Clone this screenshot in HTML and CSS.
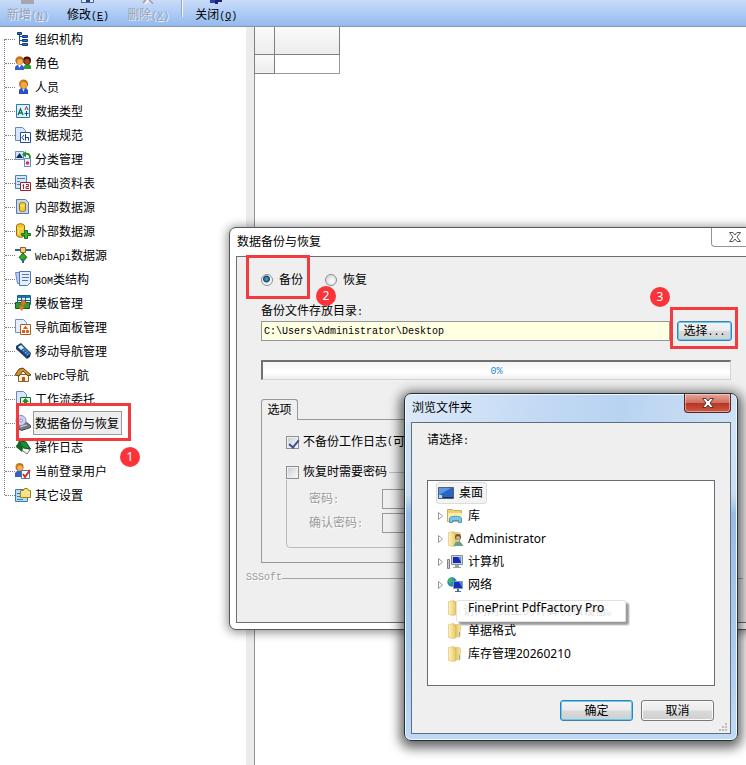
FILE: index.html
```html
<!DOCTYPE html>
<html lang="zh-CN">
<head>
<meta charset="utf-8">
<title>数据备份与恢复</title>
<link rel="stylesheet" href="styles.css">
</head>
<body>
<svg class="defs" width="0" height="0" aria-hidden="true">
  <defs>
    <linearGradient id="folder-front" x2="1"><stop offset="0" stop-color="#fdf3bc"/><stop offset="1" stop-color="#e6cb6c"/></linearGradient>
    <linearGradient id="folder-back" x2="1"><stop offset="0" stop-color="#d9b44c"/><stop offset="1" stop-color="#f8e9a4"/></linearGradient>
    <linearGradient id="hair" x2="1" y2="1"><stop offset="0" stop-color="#d89028"/><stop offset="1" stop-color="#8c4408"/></linearGradient>
    <symbol id="folder" viewBox="0 0 16 16">
      <path fill="url(#folder-back)" stroke="#d8bc64" stroke-width=".6" d="M7 1.500h5l1.500 1v5l-.5 1v5.500H7z"/>
      <path fill="url(#folder-front)" stroke="#d8bc64" stroke-width=".6" d="M1.500 1.500L7 .5v2l1.500 1V15L7 15.500l-5.500-1z"/>
      <path stroke="#7ab0b8" d="M12.500 9v4"/>
    </symbol>
  </defs>
</svg>
<div class="app">
  <header class="toolbar">
    <button class="tool" disabled>
      <svg class="tool-icon" width="16" height="4" viewBox="0 0 16 4"><path fill="#a6a6ae" d="M1 0h13v4H1z"/></svg>
      <span>新增<span class="mono">(<u>N</u>)</span></span>
    </button>
    <button class="tool">
      <svg class="tool-icon" width="16" height="4" viewBox="0 0 16 4"><path fill="#4a68a4" d="M1 0h13v3H1z"/><path fill="#dfe9f8" d="M2 0h11v2H2z"/><path fill="#27427c" d="M6 0h4v2H6z"/></svg>
      <span>修改<span class="mono">(<u>E</u>)</span></span>
    </button>
    <button class="tool" disabled>
      <svg class="tool-icon" width="16" height="4" viewBox="0 0 16 4"><path fill="none" stroke="#fff" stroke-width="2" d="M4 4l4-4 5 5"/><path fill="none" stroke="#a6a6ae" stroke-width="2" d="M3 3l3-3M9 0l4 4"/></svg>
      <span>删除<span class="mono">(<u>X</u>)</span></span>
    </button>
    <span class="tool-sep"></span>
    <button class="tool">
      <svg class="tool-icon" width="16" height="4" viewBox="0 0 16 4"><path fill="#2c3fb0" d="M2 0h5v3H2z"/><path fill="#20246c" d="M7 0h7v2h-4v2H7z"/></svg>
      <span>关闭<span class="mono">(<u>Q</u>)</span></span>
    </button>
  </header>

  <div class="workspace">
    <nav class="sidebar">
      <ul class="tree">
        <li class="node"><svg class="icon" viewBox="0 0 16 16"><path fill="none" stroke="#1c4a9c" d="M4.500 3v10.500H8M4.500 5.500H8M4.500 9.500H8"/><path fill="#2e78c8" stroke="#15377c" d="M2.500 1.500h4v2h-4zM7.500 4.500h5v2h-5zM7.500 8.500h5v2h-5zM7.500 12.500h5v2h-5z"/></svg><a href="#">组织机构</a></li>
        <li class="node"><svg class="icon" viewBox="0 0 16 16"><path fill="#2d9a2d" d="M9 14v-3l2-2h3l2 2v3z"/><circle cx="12" cy="5.500" r="4" fill="#3a1408"/><circle cx="12" cy="6.500" r="2.700" fill="#a8461c"/><path fill="#2f5fd8" d="M0 15v-3l2-2h5l2 2v3z"/><path fill="#fff" d="M3 10h3l-1.500 3z"/><circle cx="4.500" cy="5.500" r="4.200" fill="url(#hair)"/><circle cx="5" cy="6.800" r="2.900" fill="#f8b050"/></svg><a href="#">角色</a></li>
        <li class="node"><svg class="icon" viewBox="0 0 16 16"><path fill="#2450c8" d="M4 15v-4l2-2h5l2 2v4z"/><path fill="#cfe0ff" d="M7 9h3l-1.500 4z"/><circle cx="8.500" cy="5" r="4.500" fill="url(#hair)"/><circle cx="8.800" cy="6" r="3.200" fill="#f8a840"/></svg><a href="#">人员</a></li>
        <li class="node"><svg class="icon" viewBox="0 0 16 16"><path fill="#d6f6fc" stroke="#3078a8" d="M1.500 1.500h13v13h-13z"/><path fill="none" stroke="#1c6c4c" stroke-width="1.300" d="M3 12l2.500-6L8 12M4 10h3"/><path fill="none" stroke="#c02828" d="M10 7l1.500-3.500L13 7"/><path fill="none" stroke="#1c4c8c" d="M11.500 8v5M9.500 10.500h4"/></svg><a href="#">数据类型</a></li>
        <li class="node"><svg class="icon" viewBox="0 0 16 16"><path fill="#d8e8fc" stroke="#6888b8" d="M.5.500h7l3 3v10H.500z"/><path fill="#fff" stroke="#204c98" d="M5.500 5.500h10v10h-10z"/><path fill="none" stroke="#183c8c" d="M9 8l-2 2.500L9 13M10.500 7v6.500M10.500 10.500h3v3"/></svg><a href="#">数据规范</a></li>
        <li class="node"><svg class="icon" viewBox="0 0 16 16"><path fill="#d5e5fb" stroke="#7090b8" d="M.5.500h8v8h-8z"/><path fill="#142c78" d="M1 7l3.500-5L8 7z"/><path fill="none" stroke="#209030" stroke-width="2" d="M9 3c4-1 6 0 6 4"/><path fill="#209030" d="M7 3.500L11 0v6.500z"/><path fill="#e8f0ff" stroke="#6888b8" d="M9.500 7.500h6v8h-6z"/><circle cx="12.500" cy="12" r="1.700" fill="#d83030"/></svg><a href="#">分类管理</a></li>
        <li class="node"><svg class="icon" viewBox="0 0 16 16"><path fill="#d4e8fa" stroke="#4c80b8" d="M.5.500h11v13H.500z"/><path stroke="#4c80b8" d="M2 3.500h8M2 6.500h3M2 9.500h3"/><path fill="#fff" stroke="#982028" d="M5.500 7.500h10v8h-10z"/><path fill="none" stroke="#a82028" d="M7.500 10.500l1-1V14M11 9.500h2.500v2H11v2h3"/></svg><a href="#">基础资料表</a></li>
        <li class="node"><svg class="icon" viewBox="0 0 16 16"><path fill="#c8d8ec" stroke="#5878a8" d="M1.500.500h9l3 3v11h-12z"/><path fill="#f6cc34" stroke="#98700c" d="M4.500 5c0-2 6-2 6 0v6c0 2-6 2-6 0z"/><path fill="none" stroke="#fff3a8" d="M5.500 6.500c2 1 3 1 4 0"/></svg><a href="#">内部数据源</a></li>
        <li class="node"><svg class="icon" viewBox="0 0 16 16"><path fill="#f4c42c" stroke="#98700c" d="M1.500 3c0-3 8-3 8 0v9c0 3-8 3-8 0z"/><path fill="none" stroke="#fff3a0" d="M2.500 4.500c2 2 4 2 6 0M3.500 7v4"/><path fill="#38b030" stroke="#14701c" d="M9.500 7.500h3v3h3v2h-3v3h-3v-3h-3v-2h3z"/></svg><a href="#">外部数据源</a></li>
        <li class="node"><svg class="icon" viewBox="0 0 16 16"><path stroke="#2068a8" stroke-width="2" d="M0 3h16M8 4v12"/><path fill="#f8d080" stroke="#986010" d="M5.500.500h5v5h-5z"/><path fill="#30a828" stroke="#146c18" d="M8 6l4 4.500-2 1V13H6v-1.500l-2-1z"/></svg><a href="#"><span class="mono">WebApi</span>数据源</a></li>
        <li class="node"><svg class="icon" viewBox="0 0 16 16"><path fill="#b8ccf0" stroke="#6888c8" d="M.500 1.500h8v11h-6z"/><path fill="#e6f0ff" stroke="#5078b8" d="M4.500.500h11v11l-3 3h-8z"/><path stroke="#5078b8" d="M7 3.500h7M7 6.500h7M7 9.500h6"/></svg><a href="#"><span class="mono">BOM</span>类结构</a></li>
        <li class="node"><svg class="icon" viewBox="0 0 16 16"><path fill="#d8f2ff" stroke="#1c6088" d="M2.500.500h13v9h-13z"/><path fill="#1878a8" d="M3 1h12v2H3z"/><path stroke="#1c6088" d="M6.500 1v8M10.500 1v8M3 5.500h12"/><path fill="#389838" stroke="#18601c" d="M.500 7.500h14v6H.500z"/><path fill="#f07020" d="M8 4l3 4-3 3-2-3zM6 10l3 2-2 4-3-3z"/></svg><a href="#">模板管理</a></li>
        <li class="node"><svg class="icon" viewBox="0 0 16 16"><path fill="#e4eefc" stroke="#7890b8" d="M.500.500h8l3 3v10H.500z"/><path fill="#fff" stroke="#b05c18" d="M5.500 5.500h10v10h-10z"/><path fill="#e05c18" d="M8 10l2.500-3.500L13 10zM7 11h3v3H7z"/><circle cx="12.500" cy="12.500" r="1.700" fill="#e05c18"/></svg><a href="#">导航面板管理</a></li>
        <li class="node"><svg class="icon" viewBox="0 0 16 16"><path fill="#1c3c6c" d="M1 3l5-3 10 10-1 4-3 2L1 6z"/><path fill="#2868a8" d="M3 4l4-2 8 8-3 3z"/><path fill="#d8f0f8" d="M3 4l3-2 3 3-3 2z"/><path stroke="#b0dcf4" stroke-dasharray="1 1" d="M8 8l3-2M10 10l3-2M12 12l3-2"/></svg><a href="#">移动导航管理</a></li>
        <li class="node"><svg class="icon" viewBox="0 0 16 16"><path fill="#fff6dc" stroke="#806028" d="M3.500 7.500h10v7h-10z"/><path fill="#d09030" stroke="#684010" d="M0 8l4-6 4-1 8 7-3 1-5-5-4 5z"/><path fill="#b05c20" d="M7 10h3v5H7z"/></svg><a href="#"><span class="mono">WebPC</span>导航</a></li>
        <li class="node"><svg class="icon" viewBox="0 0 16 16"><path fill="#d8e8fc" stroke="#6888b8" d="M1.500.500h7l3 3v11h-10z"/><path fill="#e8ffe8" stroke="#186828" d="M5.500 6.500h10v8h-10z"/><path fill="#189030" d="M10.500 7l3.500 4h-2v3H9v-3H7z"/></svg><a href="#">工作流委托</a></li>
        <li class="node"><svg class="icon" viewBox="0 0 16 16"><path fill="#707880" stroke="#404850" d="M2.500 10.500l9-3 4 3v2l-9 3-4-2z"/><circle cx="6" cy="5.500" r="5" fill="#d4d0f4" stroke="#8088b8"/><circle cx="6" cy="5.500" r="1.500" fill="#fff" stroke="#8088b8"/><path stroke="#d8dce0" d="M5 12l7-2"/></svg><a class="current" href="#">数据备份与恢复</a>
          <span class="mark mark-node"></span><span class="badge badge-node">1</span></li>
        <li class="node"><svg class="icon" viewBox="0 0 16 16"><path fill="#f2f2ea" stroke="#707878" d="M1 7l5-3 9 7-3 4z"/><path fill="#189038" stroke="#085018" d="M3.500 1.500L11 3l4.500 7-7-1z"/><path fill="#0c6824" d="M1 8l3-6 4 7-1 4z"/></svg><a href="#">操作日志</a></li>
        <li class="node"><svg class="icon" viewBox="0 0 16 16"><path fill="#3060c8" d="M0 14v-4l2-2h5l2 3v3z"/><circle cx="4.500" cy="4" r="4" fill="url(#hair)"/><circle cx="5" cy="5" r="2.800" fill="#f8b048"/><path fill="#fff" stroke="#4878b0" d="M6.500 7.500h8v8h-8z"/><path fill="none" stroke="#d83020" stroke-width="2" d="M8 11l2 3 5-7"/></svg><a href="#">当前登录用户</a></li>
        <li class="node"><svg class="icon" viewBox="0 0 16 16"><path fill="#b8dcf0" stroke="#3880a0" d="M.500 2.500h12v12H.500z"/><path stroke="#3880a0" d="M2 6.500h3M2 9.500h3M2 12.500h6"/><path fill="#f8e488" stroke="#a08020" d="M5.500 3.500h3l1-2h3l1 2h2v7h-10z"/></svg><a href="#">其它设置</a></li>
      </ul>
    </nav>
    <div class="splitter"></div>
    <main class="content">
      <table class="grid">
        <tr><th class="grid-head"></th><th></th></tr>
        <tr><th></th><td></td></tr>
      </table>
    </main>
  </div>

  <section class="window backup" aria-label="数据备份与恢复">
    <div class="window-title">
      <h1>数据备份与恢复</h1>
      <button class="close-plain" aria-label="关闭"><svg width="12" height="10" viewBox="0 0 12 10"><path fill="#fff" stroke="#555" d="M.500.500h3.500L6 3 8 .500h3.500L8 5l3.500 4.500H8L6 7 4 9.500H.500L4 5z"/></svg></button>
    </div>
    <form class="backup-body">
      <div class="modes">
        <label class="choice"><input type="radio" name="mode" checked>备份</label>
        <label class="choice"><input type="radio" name="mode">恢复</label>
        <span class="mark mark-mode"></span><span class="badge badge-mode">2</span>
      </div>
      <label class="path-label" for="path">备份文件存放目录<span class="mono">:</span></label>
      <div class="path-row">
        <input class="path" id="path" type="text" value="C:\Users\Administrator\Desktop">
        <div class="pick">
          <button class="button focus" type="button">选择<span class="mono">...</span></button>
          <span class="mark mark-pick"></span><span class="badge badge-pick">3</span>
        </div>
      </div>
      <div class="progress" role="progressbar" aria-valuenow="0"><span class="mono">0%</span></div>
      <button class="tab" type="button">选项</button>
      <div class="tab-panel">
        <label class="choice"><input type="checkbox" checked>不备份工作日志<span class="mono">(</span>可</label>
        <fieldset class="secret">
          <legend><label class="choice"><input type="checkbox">恢复时需要密码</label></legend>
          <div class="field"><label for="pw">密码<span class="mono">:</span></label><input id="pw" type="password" disabled></div>
          <div class="field"><label for="pw2">确认密码<span class="mono">:</span></label><input id="pw2" type="password" disabled></div>
        </fieldset>
      </div>
      <div class="brand"><span class="mono">SSSoft</span></div>
    </form>
  </section>

  <section class="window browse" aria-label="浏览文件夹">
    <div class="window-title">
      <h1>浏览文件夹</h1>
      <button class="close-red" aria-label="关闭"><svg width="12" height="10" viewBox="0 0 12 10"><path fill="#fff" stroke="#5c3434" d="M.500.500h3.500L6 3 8 .500h3.500L8 5l3.500 4.500H8L6 7 4 9.500H.500L4 5z"/></svg></button>
    </div>
    <div class="browse-body">
      <p class="prompt">请选择<span class="mono">:</span></p>
      <ul class="folders">
        <li class="folder root"><span class="root-item"><svg class="icon" viewBox="0 0 16 16"><path fill="#2c62c0" stroke="#506078" d="M.500 2.500h15v11H.500z"/><path fill="#5c98e4" d="M1 3h12L1 10z"/><path fill="#b8dcf0" d="M1 10h3v3H1z"/><path fill="#202c48" d="M5 12h10v1H5z"/></svg>桌面</span></li>
        <li class="folder"><svg class="twist" viewBox="0 0 5 8"><path d="M.500.500v7L4.500 4z"/></svg><svg class="icon" viewBox="0 0 16 16"><path fill="#ecd078" stroke="#c8ac58" d="M.500 1.500h5l1 1h8v11H.500z"/><path fill="#fbefa8" d="M1 5h14v8H1z"/><path fill="#78c4ec" stroke="#4898c4" d="M2.500 14.500v-4c0-3 12-3 12 0v4h-3v-2h-6v2z"/></svg><span>库</span></li>
        <li class="folder"><svg class="twist" viewBox="0 0 5 8"><path d="M.500.500v7L4.500 4z"/></svg><svg class="icon" viewBox="0 0 16 16"><use href="#folder"/><circle cx="11" cy="6" r="3" fill="#685440"/><circle cx="11" cy="7" r="2" fill="#d8a880"/><path fill="#68a090" d="M7 15c0-6 8-6 9 0z"/></svg><span>Administrator</span></li>
        <li class="folder"><svg class="twist" viewBox="0 0 5 8"><path d="M.500.500v7L4.500 4z"/></svg><svg class="icon" viewBox="0 0 16 16"><path fill="#c8ccd0" stroke="#808488" d="M.500 5.500h2v9h-2z"/><path fill="#c8d0d8" stroke="#889098" d="M4.500 1.500h11v9h-11z"/><path fill="#1828b8" d="M6 3h8v6H6z"/><path fill="#5c90f0" d="M11 3h3v5z"/><path fill="#98a0a8" d="M8 11h4v2h2v1H6v-1h2z"/></svg><span>计算机</span></li>
        <li class="folder"><svg class="twist" viewBox="0 0 5 8"><path d="M.500.500v7L4.500 4z"/></svg><svg class="icon" viewBox="0 0 16 16"><circle cx="5" cy="5" r="4.700" fill="#2888c8"/><path fill="#40b850" d="M2 2l3-1 1 3-3 3-2-2zM6 6l3-2v4l-2 1z"/><path fill="#1830b8" stroke="#8098b8" d="M6.500 4.500h9v7h-9z"/><path fill="#5088e8" d="M12 5h3v5z"/><path fill="#507090" d="M10 12h2v2h2v1H8v-1h2z"/></svg><span>网络</span></li>
        <li class="folder leaf"><svg class="icon" viewBox="0 0 16 16"><use href="#folder"/></svg><span class="tip">访问网络上的计算机和设备。</span><span class="over">FinePrint PdfFactory Pro</span></li>
        <li class="folder leaf"><svg class="icon" viewBox="0 0 16 16"><use href="#folder"/></svg><span>单据格式</span></li>
        <li class="folder leaf"><svg class="icon" viewBox="0 0 16 16"><use href="#folder"/></svg><span>库存管理20260210</span></li>
      </ul>
      <div class="actions">
        <button class="button focus" type="button">确定</button>
        <button class="button" type="button">取消</button>
      </div>
      <svg class="grip" width="8" height="8" viewBox="0 0 8 8"><path fill="#bbb" d="M6 0h2v2H6zM3 3h2v2H3zM6 3h2v2H6zM0 6h2v2H0zM3 6h2v2H3zM6 6h2v2H6z"/></svg>
    </div>
  </section>
</div>
</body>
</html>
```

FILE: styles.css
```css
* { box-sizing: border-box; }

body {
  margin: 0;
  background: #fff;
  color: #000;
  font: 12px/16px "Liberation Sans", "Noto Sans CJK SC", sans-serif;
}

button, input { font: inherit; color: inherit; margin: 0; }
h1, p, ul { margin: 0; padding: 0; font-weight: normal; }
ul { list-style: none; }
a { color: inherit; text-decoration: none; }

.defs { position: absolute; }
.mono { font-family: "Liberation Mono", monospace; font-size: 10px; line-height: 10px; }
.icon { width: 16px; height: 16px; flex: none; }

.app {
  position: relative;
  display: flex;
  flex-direction: column;
  min-height: 100vh;
  overflow: hidden;
}

/* Toolbar */
.toolbar {
  display: flex;
  height: 27px;
  padding-left: 7px;
  gap: 18px;
  background: linear-gradient(#c9dcf8, #a9c8f4 60%, #94baee);
  border-bottom: 1px solid #8c94a4;
}
.tool {
  display: flex;
  flex-direction: column;
  align-items: center;
  gap: 3px;
  padding: 0;
  border: 0;
  background: none;
  white-space: nowrap;
}
.tool:disabled { color: #98a2b4; text-shadow: 1px 1px #e8f0fc; }
.tool-icon { flex: none; }
.tool-sep {
  width: 2px;
  height: 17px;
  margin: 0 -6px 0 -6px;
  background: #f2f6fd;
  border-left: 1px solid #94a8c8;
}

/* Workspace */
.workspace { display: flex; flex: 1; }
.sidebar { width: 246px; flex: none; }
.splitter { width: 9px; flex: none; background: #ececee; border-right: 1px solid #949494; }
.content { flex: 1; }

.tree { position: relative; }
.tree::before {
  content: "";
  position: absolute;
  left: 4px;
  top: 12px;
  bottom: 12px;
  border-left: 1px dotted #808080;
}
.node {
  position: relative;
  display: flex;
  align-items: center;
  height: 24px;
  padding-left: 5px;
}
.node::before {
  content: "";
  width: 10px;
  border-top: 1px dotted #808080;
}
.node a { padding: 4px 2px 2px 1px; margin-left: 2px; border: 1px solid transparent; line-height: 16px; }
.node .current { background: #eee; border-color: #999; }

.grid { border-collapse: collapse; margin-left: -1px; }
.grid th, .grid td { padding: 0; height: 19px; border: 1px solid #999; border-top-width: 0; }
.grid th { width: 20px; background: linear-gradient(#fafafa, #ececec); border-color: #808080; }
.grid .grid-head, .grid .grid-head + th { height: 27px; }
.grid .grid-head + th { width: 65px; }

/* Numbered markers */
.mark { position: absolute; border: 3px solid #f23a3f; pointer-events: none; z-index: 2; }
.badge {
  position: absolute;
  z-index: 3;
  width: 20px;
  height: 20px;
  border-radius: 50%;
  background: #fa3438;
  color: #fff;
  font: 12px/20px "Noto Sans", sans-serif;
  text-align: center;
}
.mark-node { left: 16px; top: -8px; width: 115px; height: 38px; }
.badge-node { left: 120px; top: 36px; }
.mark-mode { left: -15px; top: -17px; width: 64px; height: 44px; }
.badge-mode { left: 55px; top: 14px; }
.mark-pick { left: -7px; top: -14px; width: 68px; height: 42px; }
.badge-pick { left: -27px; top: -34px; }

/* Windows */
.window { position: absolute; border: 1px solid #55585c; border-radius: 7px; }
.window-title { display: flex; justify-content: space-between; align-items: flex-start; height: 28px; }

.backup {
  left: 229px;
  right: -8px;
  top: 227px;
  padding: 0 6px 6px;
  background: #fff;
  box-shadow: 0 1px 10px 2px rgba(0, 0, 0, .4);
}
.backup h1 { font-size: 12px; line-height: 28px; padding-left: 1px; }
.close-plain {
  width: 44px;
  height: 19px;
  padding: 0 0 0 4px;
  margin-right: -8px;
  border: 1px solid #909498;
  border-top: 0;
  border-radius: 0 0 4px 4px;
  background: #fff;
}
.close-plain svg, .close-red svg { display: block; margin: 0 auto; }
.backup-body {
  display: flex;
  flex-direction: column;
  padding: 15px 14px 36px 24px;
  background: #efefef;
  border: 1px solid #6c7074;
}

.modes { position: relative; display: flex; gap: 22px; }
.choice { display: flex; align-items: center; height: 16px; white-space: nowrap; }
.choice input { appearance: none; flex: none; }
.choice input[type="radio"] {
  width: 12px;
  height: 12px;
  margin-right: 6px;
  border: 1px solid #8a8e92;
  border-radius: 50%;
  background: radial-gradient(circle at 60% 60%, #fff, #c8ccd0);
}
.choice input[type="radio"]:checked {
  background: radial-gradient(circle at 45% 40%, #58b4dc 0, #164468 3px, #f4f6f8 4px);
}
.choice input[type="checkbox"] {
  width: 13px;
  height: 13px;
  margin-right: 4px;
  border: 1px solid #8c9094;
  background: linear-gradient(135deg, #cdd0d4, #f8f8f8) content-box #f8f8f8;
  padding: 1px;
}
.choice input[type="checkbox"]:checked::before {
  content: "";
  display: block;
  width: 4px;
  height: 8px;
  margin-left: 3px;
  border: solid #3c4c98;
  border-width: 0 2px 2px 0;
  transform: rotate(40deg);
}

.path-label { height: 16px; margin-top: 15px; }
.path-row { display: flex; gap: 7px; margin-top: 2px; }
.path {
  flex: 1;
  min-width: 0;
  height: 20px;
  padding: 0 2px;
  border: 1px solid #969696;
  background: #ffffe1;
  font: 10px/18px "Liberation Mono", monospace;
}
.pick { position: relative; display: flex; width: 55px; }

.button {
  flex: 1;
  padding: 0;
  border: 1px solid #77797b;
  border-radius: 3px;
  background: linear-gradient(#f4f4f4, #ebebeb 49%, #dadada 51%, #cfcfcf);
  box-shadow: inset 0 0 0 1px #fafafa;
}
.button.focus { border-color: #3c7fb1; box-shadow: inset 0 0 0 1px #5ccdf2; }

.progress {
  height: 20px;
  margin-top: 19px;
  margin-right: 1px;
  border: 1px solid #d4d4d4;
  border-top: 2px solid #707070;
  border-left: 2px solid #707070;
  background: linear-gradient(#f4f4f4, #fff 60%, #f0f0f0);
  color: #1c86d8;
  line-height: 17px;
  text-align: center;
}

.tab {
  align-self: flex-start;
  width: 37px;
  height: 21px;
  margin-top: 19px;
  padding: 0;
  border: 1px solid #989898;
  border-bottom: 0;
  border-radius: 3px 3px 0 0;
  background: #efefef;
  z-index: 1;
}
.tab-panel { margin-top: -1px; padding: 14px 24px 14px; border: 1px solid #989898; }

.secret {
  min-width: 0;
  margin: 14px 0 0;
  padding: 9px 22px 14px;
  border: 1px solid #bcbcbc;
  border-radius: 4px;
}
.secret legend { margin-left: -23px; padding: 0 2px 0 0; }
.field { display: flex; align-items: center; height: 20px; color: #999; text-shadow: 1px 1px #fff; }
.field + .field { margin-top: 4px; }
.field label { width: 73px; }
.field input { width: 160px; height: 20px; border: 1px solid #999; background: #efefef; }

.brand {
  display: flex;
  align-items: center;
  height: 16px;
  margin: 7px -11px 0 -15px;
  color: #999;
  text-shadow: 1px 1px #fff;
}
.brand::after { content: ""; flex: 1; border-top: 1px solid #a4a4a4; }

.browse {
  left: 404px;
  top: 393px;
  width: 334px;
  padding: 0 6px 6px;
  border-color: #22303c;
  background: linear-gradient(#c4dbf4 0, #d2e4f6 28px, #c9def4 100px, #98bce4 120px, #b4d2f2 300px, #c0daf4);
  box-shadow: inset 0 0 0 1px #f0f8ff, 0 3px 12px 4px rgba(0, 0, 0, .6);
}
.browse .window-title { background: linear-gradient(100deg, #dce9f8, #c0d8f3 45%, #b8d3f1 65%, #cfe1f5); margin: 1px -5px 0; height: 27px; padding: 0 5px; border-radius: 6px 6px 0 0; }
.browse h1 { font-size: 12px; line-height: 27px; padding-left: 1px; }
.close-red {
  width: 47px;
  height: 19px;
  margin-top: -1px;
  padding: 0;
  border: 1px solid #582424;
  border-top: 0;
  border-radius: 0 0 4px 4px;
  background: linear-gradient(#e4a898, #d07060 48%, #b83424 52%, #cc5c44);
  box-shadow: inset 0 0 0 1px rgba(255, 230, 220, .5);
}
.browse-body {
  position: relative;
  padding: 9px 15px 12px 15px;
  background: #efefef;
  border: 1px solid #5c7080;
}
.prompt { height: 16px; }
.folders {
  margin-top: 32px;
  padding: 0 0 20px 7px;
  border: 1px solid #646c74;
  background: #fff;
  font-family: "Noto Sans", "Noto Sans CJK SC", sans-serif;
}
.folder { position: relative; display: flex; align-items: center; height: 23px; padding-left: 3px; gap: 4px; }
.folder span:last-child { margin-left: 1px; }
.folder.root { padding-left: 0; }
.folder.leaf { padding-left: 12px; }
.root-item {
  display: flex;
  align-items: center;
  gap: 5px;
  height: 22px;
  padding: 0 3px 0 1px;
  border: 1px solid #dcdcdc;
  border-radius: 3px;
  background: #f3f3f3;
}
.twist { width: 5px; height: 8px; fill: #fff; stroke: #999; }
.folder .over { position: relative; }
.tip {
  position: absolute;
  left: 21px;
  top: 4px;
  width: 170px;
  height: 22px;
  padding-left: 6px;
  border: 1px solid #e2e2e2;
  border-radius: 2px;
  background: rgba(255, 255, 255, .9);
  box-shadow: 3px 3px 2px rgba(0, 0, 0, .4);
  color: #e2e2e2;
  line-height: 20px;
  white-space: nowrap;
}
.actions { display: flex; justify-content: flex-end; gap: 8px; margin: 14px 1px 0 0; }
.actions .button { flex: none; width: 73px; height: 21px; }
.grip { position: absolute; right: 3px; bottom: 2px; }
```
